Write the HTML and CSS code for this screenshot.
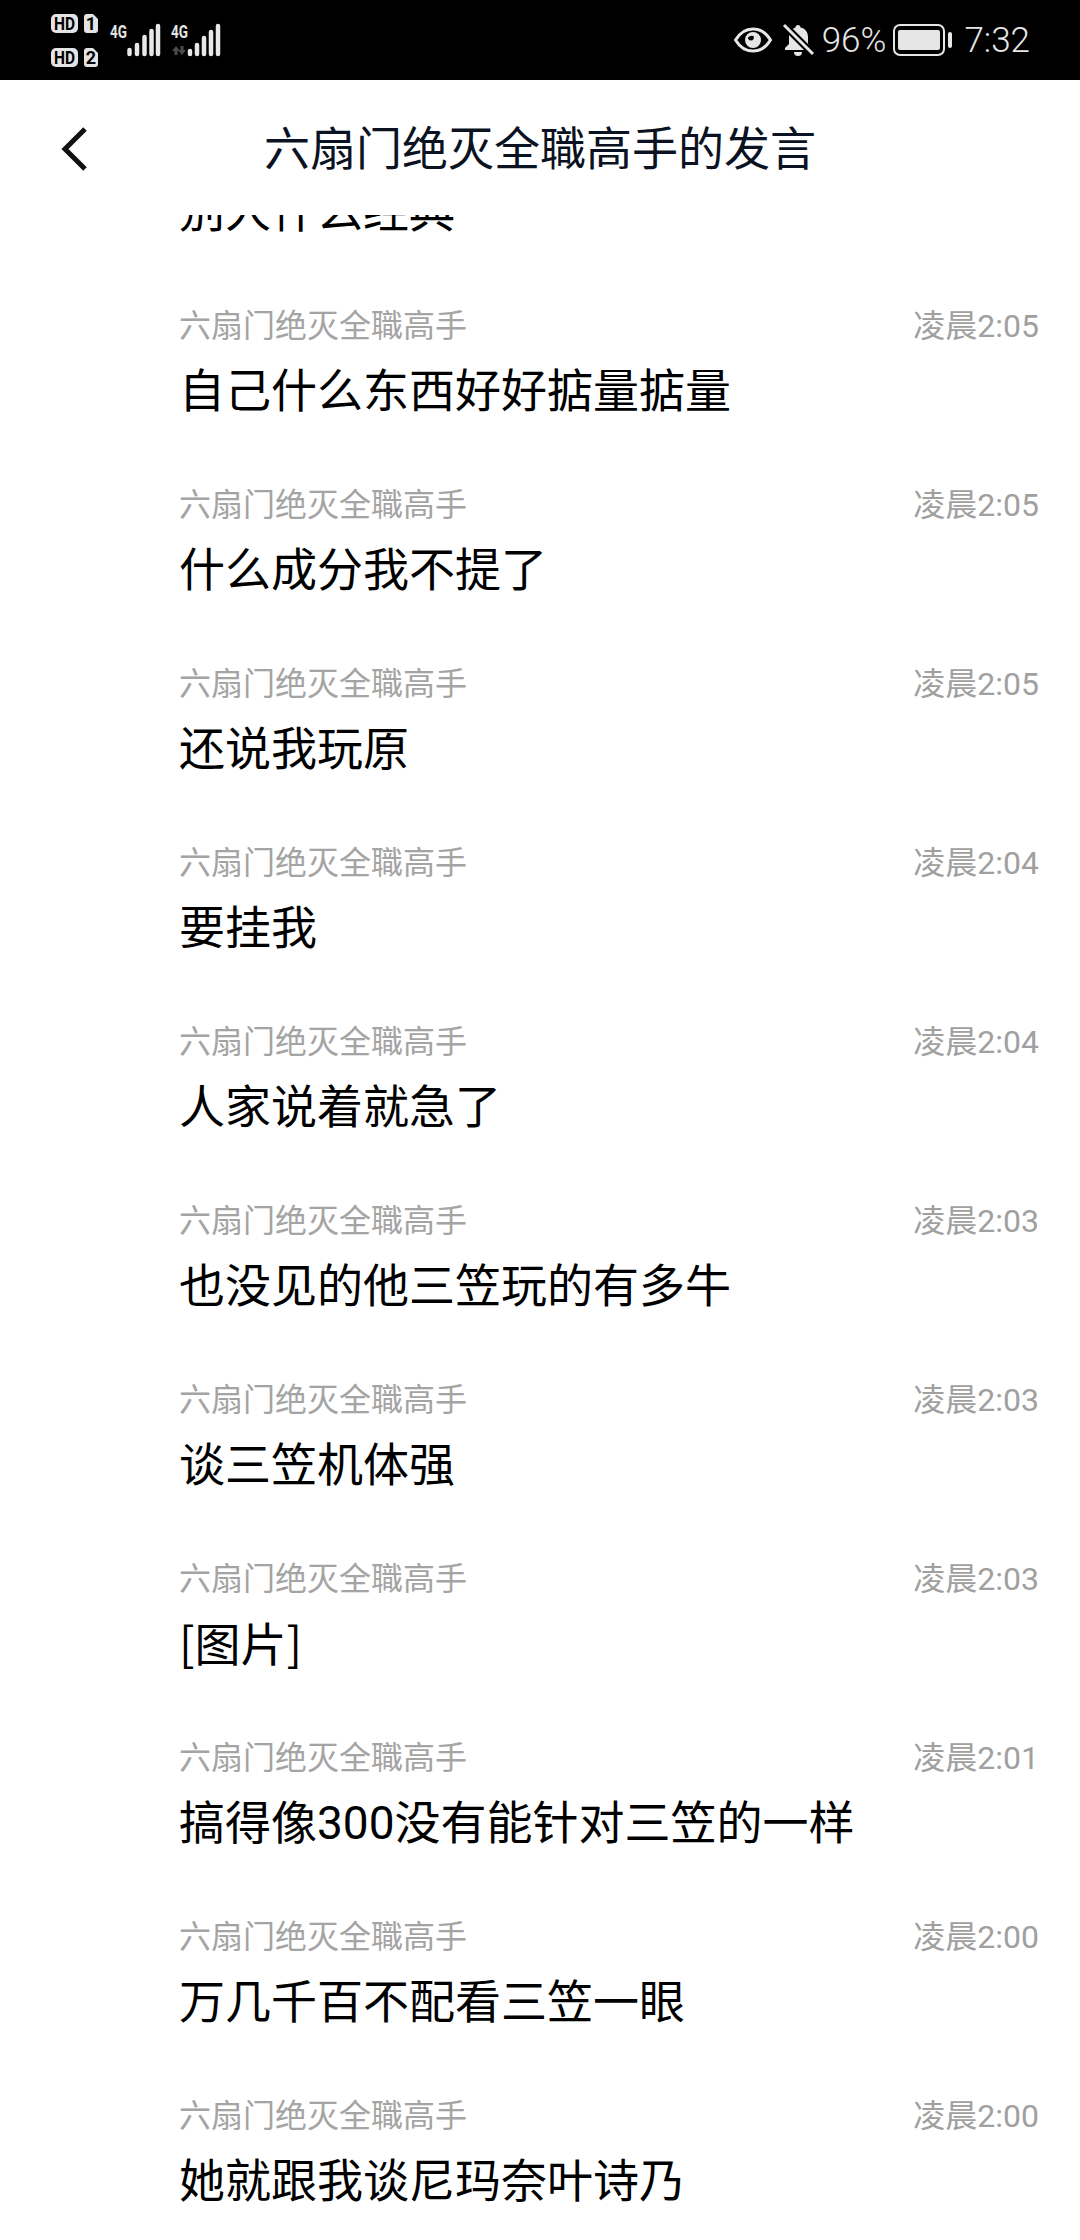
FILE: index.html
```html
<!DOCTYPE html>
<html lang="zh">
<head>
<meta charset="utf-8">
<title>六扇门绝灭全職高手的发言</title>
<link rel="stylesheet" href="styles.css">
</head>
<body>
<div class="phone">
  <header class="status">
    <svg class="status-left" width="180" height="80" viewBox="0 0 180 80">
      <rect class="sb" x="51" y="14" width="27" height="19" rx="5"/>
      <text class="hd" x="64.500" y="30" textLength="21" lengthAdjust="spacingAndGlyphs">HD</text>
      <path class="sb" d="M87 14h6l5 5v11a3 3 0 0 1-3 3h-8a3 3 0 0 1-3-3V17a3 3 0 0 1 3-3z"/>
      <text class="hd" x="91" y="30">1</text>
      <rect class="sb" x="51" y="48" width="27" height="19" rx="5"/>
      <text class="hd" x="64.500" y="64" textLength="21" lengthAdjust="spacingAndGlyphs">HD</text>
      <path class="sb" d="M87 48h6l5 5v11a3 3 0 0 1-3 3h-8a3 3 0 0 1-3-3V51a3 3 0 0 1 3-3z"/>
      <text class="hd" x="91" y="64">2</text>
      <text class="net" x="118.500" y="38" textLength="17" lengthAdjust="spacingAndGlyphs">4G</text>
      <g class="bars">
        <path d="M129.500 50v4M137 45v9M144.500 37v17M151.500 31v23M158 26v28"/>
      </g>
      <text class="net" x="179.500" y="38" textLength="17" lengthAdjust="spacingAndGlyphs">4G</text>
    </svg>
    <svg class="status-net2" width="40" height="80" viewBox="180 0 40 80">
      <path class="dim" d="M176 46l-4 5h2.500v4h3v-4h2.500zM182 55l4-5h-2.500v-4h-3v4h-2.500z"/>
      <g class="bars">
        <path d="M190 51v3M197 45v9M204 38v16M211 32v22M218 26v28"/>
      </g>
    </svg>
    <div class="status-right">
      <svg class="eye" width="38" height="26" viewBox="0 0 38 26">
        <path class="line" d="M1.500 13C6 5.500 12 2 19 2s13 3.500 17.500 11C32 20.500 26 24 19 24S6 20.500 1.500 13z"/>
        <path class="fill" fill-rule="evenodd" d="M19 5a8 8 0 1 1 0 16a8 8 0 0 1 0-16zM14 10.500a3 3 0 0 0 3 3a3 3 0 0 0 2.500-4.500a5 5 0 0 0-5.500 1.500z"/>
      </svg>
      <svg class="bell" width="30" height="32" viewBox="0 0 30 32">
        <path class="fill" d="M14 1c-1.500 0-2.500 1-2.500 2.500C6.500 5 5 9 5 13v7l-4 4v2h26v-2l-3-4v-7c0-4-2-8.500-7.500-9.500C16.500 2 15.500 1 14 1z"/>
        <path class="fill" d="M10 28h8a4 4 0 0 1-8 0z"/>
        <path class="gap" d="M-1 0L29 30"/>
        <path class="line" d="M0 1L29 30"/>
      </svg>
      <span class="pct">96%</span>
      <svg class="batt" width="60" height="32" viewBox="0 0 60 32">
        <rect class="line thin" x="1" y="1" width="50" height="30" rx="6"/>
        <rect class="fill" x="5" y="6" width="42" height="20" rx="2"/>
        <rect class="fill" x="55" y="8" width="4" height="16" rx="2"/>
      </svg>
      <span class="clock">7:32</span>
    </div>
  </header>

  <nav class="nav">
    <svg class="back" width="28" height="46" viewBox="0 0 28 46">
      <path d="M25 3L5 23l20 20"/>
    </svg>
    <h1 class="title">六扇门绝灭全職高手的发言</h1>
  </nav>

  <main class="list">
    <div class="row row-cut"><p class="msg">别人什么经典</p></div>
    <article class="row"><div class="meta"><span>六扇门绝灭全職高手</span><time>凌晨2:05</time></div><p class="msg">自己什么东西好好掂量掂量</p></article>
    <article class="row"><div class="meta"><span>六扇门绝灭全職高手</span><time>凌晨2:05</time></div><p class="msg">什么成分我不提了</p></article>
    <article class="row"><div class="meta"><span>六扇门绝灭全職高手</span><time>凌晨2:05</time></div><p class="msg">还说我玩原</p></article>
    <article class="row"><div class="meta"><span>六扇门绝灭全職高手</span><time>凌晨2:04</time></div><p class="msg">要挂我</p></article>
    <article class="row"><div class="meta"><span>六扇门绝灭全職高手</span><time>凌晨2:04</time></div><p class="msg">人家说着就急了</p></article>
    <article class="row"><div class="meta"><span>六扇门绝灭全職高手</span><time>凌晨2:03</time></div><p class="msg">也没见的他三笠玩的有多牛</p></article>
    <article class="row"><div class="meta"><span>六扇门绝灭全職高手</span><time>凌晨2:03</time></div><p class="msg">谈三笠机体强</p></article>
    <article class="row"><div class="meta"><span>六扇门绝灭全職高手</span><time>凌晨2:03</time></div><p class="msg msg-cjk">[图片]</p></article>
    <article class="row"><div class="meta"><span>六扇门绝灭全職高手</span><time>凌晨2:01</time></div><p class="msg">搞得像300没有能针对三笠的一样</p></article>
    <article class="row"><div class="meta"><span>六扇门绝灭全職高手</span><time>凌晨2:00</time></div><p class="msg">万几千百不配看三笠一眼</p></article>
    <article class="row"><div class="meta"><span>六扇门绝灭全職高手</span><time>凌晨2:00</time></div><p class="msg">她就跟我谈尼玛奈叶诗乃</p></article>
  </main>
</div>
</body>
</html>
```

FILE: styles.css
```css
* { box-sizing: border-box; }
html, body { margin: 0; padding: 0; background: #fff; }
body { font-family: Roboto, "Noto Sans CJK SC", sans-serif; }

.phone {
  width: 1080px;
  height: 2240px;
  overflow: hidden;
  display: flex;
  flex-direction: column;
}

/* status bar */
.status {
  flex: none;
  height: 80px;
  background: #000;
  display: flex;
  align-items: flex-start;
}
.status-left, .status-net2 { flex: none; display: block; overflow: visible; }
.sb { fill: #e4e4e4; }
.hd {
  font: 700 18px "Roboto", sans-serif;
  fill: #000;
  text-anchor: middle;
}
.net {
  font: 700 18px "Roboto", sans-serif;
  fill: #e4e4e4;
  text-anchor: middle;
}
.bars path { fill: none; stroke: #e8e8e8; stroke-width: 4.500; stroke-linecap: round; }
.dim { fill: #4a4a4a; }

.status-right {
  margin-left: auto;
  height: 80px;
  padding-right: 50px;
  display: flex;
  align-items: center;
  color: #e6e6e6;
  font-size: 35px;
  font-weight: 300;
}
.status-right svg { flex: none; display: block; overflow: visible; }
.line { fill: none; stroke: #e6e6e6; stroke-width: 3; }
.gap { fill: none; stroke: #000; stroke-width: 7; }
.thin { stroke-width: 2; }
.fill { fill: #e6e6e6; }
.eye { margin-right: 12px; }
.bell { margin-right: 8px; }
.batt { margin-left: 7px; margin-right: 11px; }

/* nav */
.nav {
  flex: none;
  position: relative;
  z-index: 1;
  height: 135px;
  background: #fff;
  display: flex;
  justify-content: center;
  padding-top: 34px;
}
.back {
  position: absolute;
  left: 60px;
  top: 46px;
  fill: none;
  stroke: #111;
  stroke-width: 5;
}
.title {
  margin: 0;
  font-size: 46px;
  font-weight: 400;
  line-height: 70px;
  color: #0b1222;
}

/* messages */
.list {
  flex: 1;
  min-height: 0;
  overflow: hidden;
  padding: 0 41px 0 179px;
}
.row {
  height: 179px;
  padding-top: 10px;
}
.row-cut {
  height: 73px;
  padding-top: 0;
  display: flex;
  align-items: flex-start;
}
.row-cut .msg { margin-top: -36px; }
.meta {
  display: flex;
  justify-content: space-between;
  align-items: center;
  height: 50px;
  font-size: 32px;
  font-weight: 400;
  color: #a0a0a0;
}
.meta span { color: #a4a4a4; }
.msg {
  margin: 11px 0 0;
  font-size: 46px;
  line-height: 64px;
  color: #000;
}
.msg-cjk { margin-top: 8px; font-family: "Noto Sans CJK SC", sans-serif; }
```
